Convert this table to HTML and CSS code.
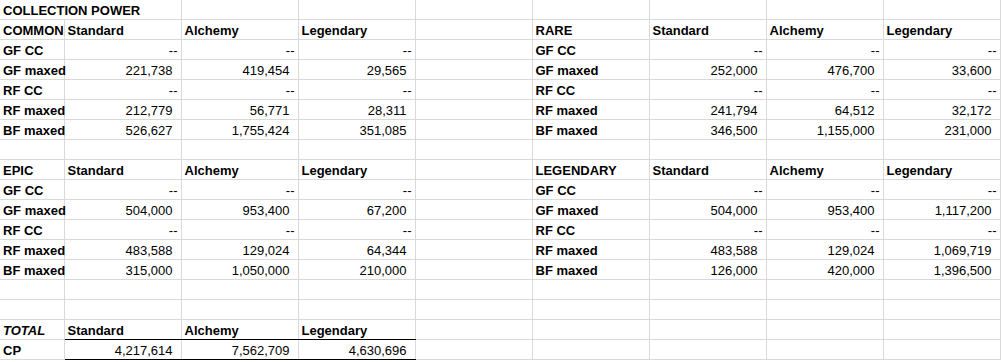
FILE: index.html
```html
<!DOCTYPE html>
<html>
<head>
<meta charset="utf-8">
<link rel="stylesheet" href="styles.css">
</head>
<body>
<table class="sheet">
<colgroup>
<col class="ca"><col class="cw"><col class="cw"><col class="cw"><col class="cw"><col class="cw"><col class="cw"><col class="cw"><col class="cw">
</colgroup>
<tbody>
<tr><td class="b" colspan="2">COLLECTION POWER</td><td></td><td></td><td></td><td></td><td></td><td></td><td></td></tr>
<tr><td class="b">COMMON</td><td class="b">Standard</td><td class="b">Alchemy</td><td class="b">Legendary</td><td></td><td class="b">RARE</td><td class="b">Standard</td><td class="b">Alchemy</td><td class="b">Legendary</td></tr>
<tr><td class="b">GF CC</td><td class="d">--</td><td class="d">--</td><td class="d">--</td><td></td><td class="b">GF CC</td><td class="d">--</td><td class="d">--</td><td class="d">--</td></tr>
<tr><td class="b">GF maxed</td><td class="n">221,738</td><td class="n">419,454</td><td class="n">29,565</td><td></td><td class="b">GF maxed</td><td class="n">252,000</td><td class="n">476,700</td><td class="n">33,600</td></tr>
<tr><td class="b">RF CC</td><td class="d">--</td><td class="d">--</td><td class="d">--</td><td></td><td class="b">RF CC</td><td class="d">--</td><td class="d">--</td><td class="d">--</td></tr>
<tr><td class="b">RF maxed</td><td class="n">212,779</td><td class="n">56,771</td><td class="n">28,311</td><td></td><td class="b">RF maxed</td><td class="n">241,794</td><td class="n">64,512</td><td class="n">32,172</td></tr>
<tr><td class="b">BF maxed</td><td class="n">526,627</td><td class="n">1,755,424</td><td class="n">351,085</td><td></td><td class="b">BF maxed</td><td class="n">346,500</td><td class="n">1,155,000</td><td class="n">231,000</td></tr>
<tr><td></td><td></td><td></td><td></td><td></td><td></td><td></td><td></td><td></td></tr>
<tr><td class="b">EPIC</td><td class="b">Standard</td><td class="b">Alchemy</td><td class="b">Legendary</td><td></td><td class="b">LEGENDARY</td><td class="b">Standard</td><td class="b">Alchemy</td><td class="b">Legendary</td></tr>
<tr><td class="b">GF CC</td><td class="d">--</td><td class="d">--</td><td class="d">--</td><td></td><td class="b">GF CC</td><td class="d">--</td><td class="d">--</td><td class="d">--</td></tr>
<tr><td class="b">GF maxed</td><td class="n">504,000</td><td class="n">953,400</td><td class="n">67,200</td><td></td><td class="b">GF maxed</td><td class="n">504,000</td><td class="n">953,400</td><td class="n">1,117,200</td></tr>
<tr><td class="b">RF CC</td><td class="d">--</td><td class="d">--</td><td class="d">--</td><td></td><td class="b">RF CC</td><td class="d">--</td><td class="d">--</td><td class="d">--</td></tr>
<tr><td class="b">RF maxed</td><td class="n">483,588</td><td class="n">129,024</td><td class="n">64,344</td><td></td><td class="b">RF maxed</td><td class="n">483,588</td><td class="n">129,024</td><td class="n">1,069,719</td></tr>
<tr><td class="b">BF maxed</td><td class="n">315,000</td><td class="n">1,050,000</td><td class="n">210,000</td><td></td><td class="b">BF maxed</td><td class="n">126,000</td><td class="n">420,000</td><td class="n">1,396,500</td></tr>
<tr><td></td><td></td><td></td><td></td><td></td><td></td><td></td><td></td><td></td></tr>
<tr><td></td><td></td><td></td><td></td><td></td><td></td><td></td><td></td><td></td></tr>
<tr><td class="b i">TOTAL</td><td class="b ul">Standard</td><td class="b ul">Alchemy</td><td class="b ul">Legendary</td><td></td><td></td><td></td><td></td><td></td></tr>
<tr><td class="b">CP</td><td class="n ul">4,217,614</td><td class="n ul">7,562,709</td><td class="n ul">4,630,696</td><td></td><td></td><td></td><td></td><td></td></tr>
</tbody>
</table>
</body>
</html>
```
FILE: styles.css
```css
html, body {
  margin: 0;
  padding: 0;
  background: #ffffff;
}
.sheet {
  border-collapse: collapse;
  table-layout: fixed;
  width: 1000px;
  font-family: "Liberation Sans", Arial, sans-serif;
  font-size: 13px;
  color: #000000;
}
.ca { width: 64px; }
.cw { width: 117px; }
.sheet td {
  height: 19px;
  padding: 0 3px 0 3px;
  line-height: 16px;
  vertical-align: bottom;
  border-right: 1px solid #d9d9d9;
  border-bottom: 1px solid #d9d9d9;
  white-space: nowrap;
  overflow: visible;
  text-align: left;
}
.sheet td.b { font-weight: bold; }
.sheet td.i { font-style: italic; }
.sheet td.n { text-align: right; padding-right: 8px; }
.sheet td.d { text-align: right; padding-right: 3px; }
.sheet td.ul { border-bottom: 1px solid #000000; }
```
